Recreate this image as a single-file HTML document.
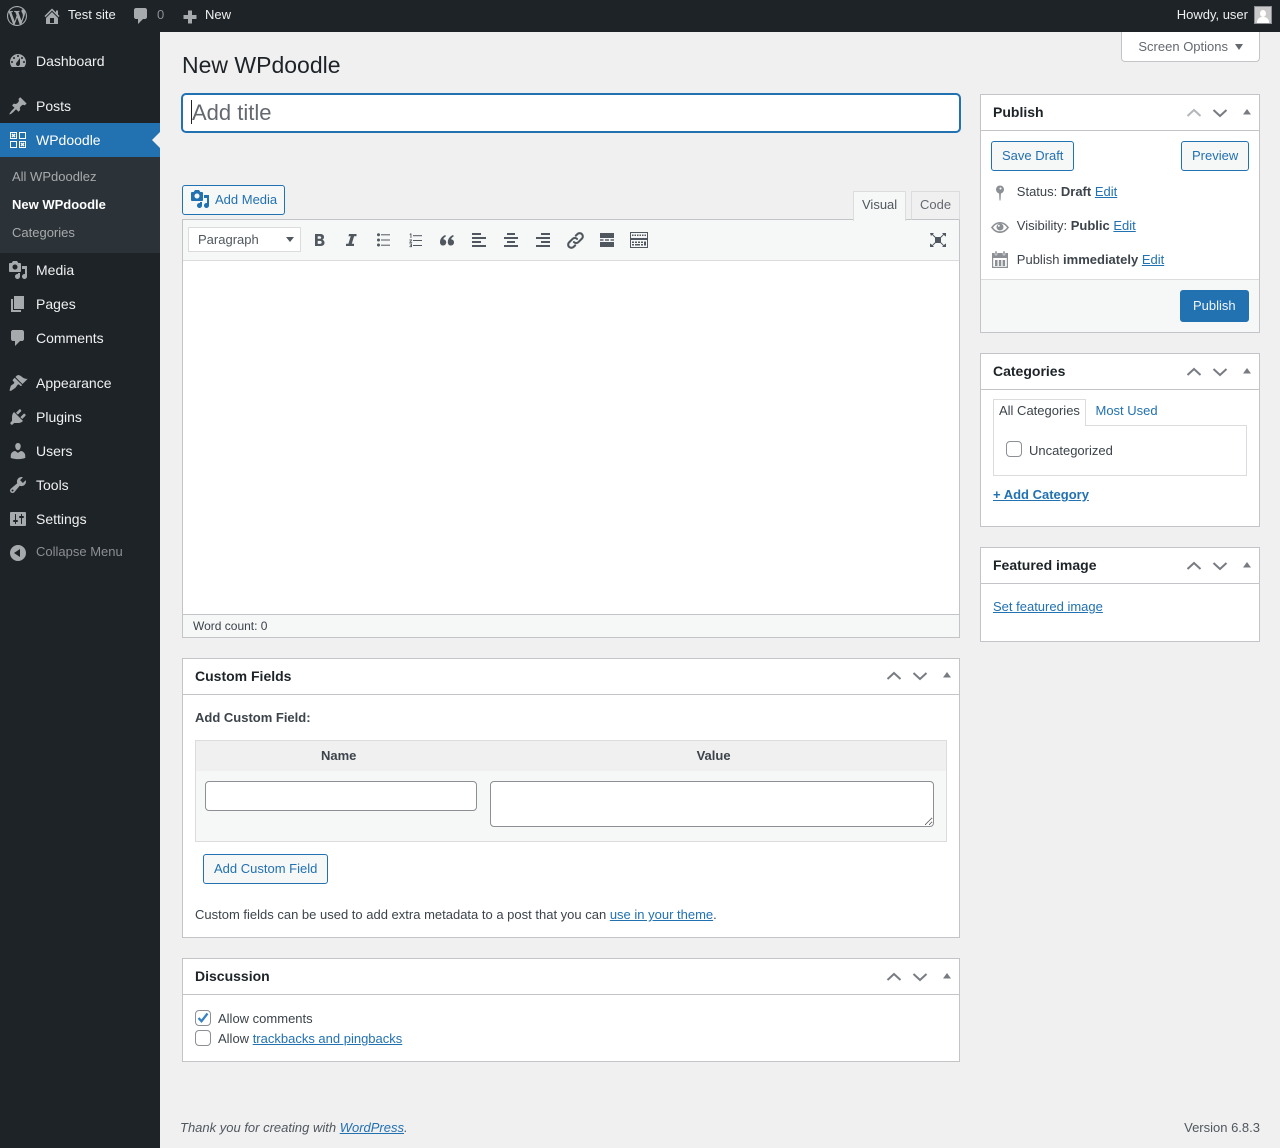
<!DOCTYPE html>
<html lang="en"><head><meta charset="utf-8"><title>New WPdoodle</title>
<style>
*{box-sizing:border-box}
html,body{margin:0;padding:0}
body{width:1280px;height:1148px;position:relative;overflow:hidden;background:#f0f0f1;font:13px/20px "Liberation Sans",sans-serif;color:#3c434a}
.a{position:absolute}
.t{position:absolute;white-space:nowrap;line-height:20px}
a{color:#2271b1;text-decoration:underline}
svg{position:absolute;display:block;overflow:visible}
.ic{width:20px;height:20px;fill:#a7aaad;left:8px}
.m{left:36px;font-size:14px;color:#f0f0f1}
.s{left:12px;font-size:13px;color:#b0b4b8}
.bar{font-size:13px;color:#f0f0f1}
.box{position:absolute;background:#fff;border:1px solid #c3c4c7}
.hd{position:absolute;left:0;right:0;top:0;height:36px;border-bottom:1px solid #c3c4c7}
.h2{position:absolute;left:12px;top:7px;font-size:14px;font-weight:700;color:#1d2327;white-space:nowrap;line-height:20px}
.btn{position:absolute;border:1px solid #2271b1;border-radius:3px;background:#f6f7f7;color:#2271b1;text-align:left;padding-left:10px;font-size:13px;line-height:28px;white-space:nowrap}
.tb{fill:#50575e;width:20px;height:20px;top:230px}
input[type=checkbox]{appearance:none;-webkit-appearance:none;position:absolute;margin:0;width:16px;height:16px;border:1px solid #8c8f94;border-radius:4px;background:#fff}
.ctl{stroke:#787c82;stroke-width:2;fill:none}
.cv{width:65px;height:10px}
</style></head><body>

<!-- admin bar -->
<div class="a" style="left:0;top:0;width:1280px;height:32px;background:#1d2327"></div>
<svg style="left:7px;top:6px;width:20px;height:20px;fill:#a7aaad" viewBox="0 0 20 20"><path fill-rule="evenodd" d="M20 10c0-5.51-4.49-10-10-10C4.48 0 0 4.49 0 10c0 5.52 4.48 10 10 10 5.51 0 10-4.48 10-10zM7.78 15.37L4.37 6.22c.55-.02 1.17-.08 1.17-.08.5-.06.44-1.13-.06-1.11 0 0-1.45.11-2.37.11-.18 0-.37 0-.58-.01C4.12 2.69 6.87 1.11 10 1.11c2.33 0 4.45.87 6.05 2.34-.68-.11-1.65.39-1.65 1.58 0 .74.45 1.36.9 2.1.35.61.55 1.36.55 2.46 0 1.49-1.4 5-1.4 5l-3.03-8.37c.54-.02.82-.17.82-.17.5-.05.44-1.25-.06-1.22 0 0-1.44.12-2.38.12-.87 0-2.33-.12-2.33-.12-.5-.03-.56 1.2-.06 1.22l.92.08 1.26 3.41zM17.41 10c.24-.64.74-1.87.43-4.25.7 1.29 1.05 2.71 1.05 4.25 0 3.29-1.73 6.24-4.4 7.78.97-2.59 1.94-5.2 2.92-7.78zM6.1 18.09C3.12 16.65 1.11 13.53 1.11 10c0-1.3.23-2.48.72-3.59C3.25 10.3 4.67 14.2 6.1 18.09zm4.03-6.63l2.58 6.98c-.86.29-1.76.45-2.71.45-.79 0-1.57-.11-2.29-.33.81-2.38 1.62-4.74 2.42-7.1z"/></svg>
<svg style="left:42px;top:6px;width:20px;height:20px;fill:#a7aaad" viewBox="0 0 20 20"><path fill-rule="evenodd" d="M16 8.5l1.53 1.53-1.06 1.06L10 4.62l-6.47 6.47-1.06-1.06L10 2.5l4 4v-2h2v4zm-6-2.46l6 5.99V18H4v-5.97zM12 17v-5H8v5h4z"/></svg>
<div class="t bar" style="left:68px;top:5px">Test site</div>
<svg style="left:131px;top:6px;width:20px;height:20px;fill:#a7aaad" viewBox="0 0 20 20"><path d="M5 2h9c1.1 0 2 .9 2 2v7c0 1.1-.9 2-2 2h-2l-5 5v-5H5c-1.1 0-2-.9-2-2V4c0-1.1.9-2 2-2z"/></svg>
<div class="t bar" style="left:157px;top:5px;color:#8c8f94">0</div>
<svg style="left:179.5px;top:7.5px;width:20px;height:20px;fill:#a7aaad" viewBox="0 0 20 20"><path d="M16.5 7v4H12v4.500H8V11H3.500V7H8V2.500h4V7h4.500z"/></svg>
<div class="t bar" style="left:205px;top:5px">New</div>
<div class="t bar" style="right:32px;top:5px">Howdy, user</div>
<div class="a" style="left:1254px;top:6px;width:18px;height:18px;background:#c9c9c9;border:1px solid #8c8f94;overflow:hidden">
<div class="a" style="left:5px;top:3px;width:6px;height:7px;border-radius:50%;background:#fff"></div>
<div class="a" style="left:2px;top:10px;width:12px;height:8px;border-radius:5px 5px 0 0;background:#fff"></div></div>

<!-- sidebar -->
<div class="a" style="left:0;top:32px;width:160px;height:1116px;background:#1d2327"></div>
<div class="a" style="left:0;top:123px;width:160px;height:34px;background:#2271b1"></div>
<div class="a" style="left:0;top:157px;width:160px;height:96px;background:#2c3338"></div>
<div class="a" style="left:152px;top:132px;width:0;height:0;border:8px solid transparent;border-left:0;border-right-color:#f0f0f1"></div>

<svg class="ic" style="top:51px" viewBox="0 0 20 20"><path fill-rule="evenodd" d="M3.76 16h12.48c1.1-1.37 1.76-3.11 1.76-5 0-4.42-3.58-8-8-8s-8 3.58-8 8c0 1.89.66 3.63 1.76 5zM10 4c.55 0 1 .45 1 1s-.45 1-1 1-1-.45-1-1 .45-1 1-1zM6 6c.55 0 1 .45 1 1s-.45 1-1 1-1-.45-1-1 .45-1 1-1zm8 0c.55 0 1 .45 1 1s-.45 1-1 1-1-.45-1-1 .45-1 1-1zm-5.37 5.55L12 7v6c0 1.1-.9 2-2 2s-2-.9-2-2c0-.57.24-1.08.63-1.45zM4 10c.55 0 1 .45 1 1s-.45 1-1 1-1-.45-1-1 .45-1 1-1zm12 0c.55 0 1 .45 1 1s-.45 1-1 1-1-.45-1-1 .45-1 1-1z"/></svg>
<div class="t m" style="top:51px">Dashboard</div>
<svg class="ic" style="top:96px" viewBox="0 0 20 20"><path d="M10.44 3.02l1.82-1.82 6.36 6.35-1.83 1.82c-1.05-.68-2.48-.57-3.41.36l-.75.75c-.92.93-1.04 2.35-.35 3.41l-1.83 1.82-2.41-2.41-2.8 2.79c-.42.42-3.38 2.71-3.8 2.29s1.86-3.39 2.28-3.81l2.79-2.79L4.1 9.36l1.83-1.82c1.05.69 2.48.57 3.4-.36l.75-.75c.93-.92 1.05-2.35.36-3.41z"/></svg>
<div class="t m" style="top:96px">Posts</div>
<svg style="left:10px;top:132px;width:16px;height:16px" viewBox="0 0 16 16">
<g fill="none" stroke="#fff" stroke-width="1"><rect x=".5" y=".5" width="6" height="6"/><rect x="9.5" y=".5" width="6" height="6"/><rect x=".5" y="9.5" width="6" height="6"/><rect x="9.5" y="9.5" width="6" height="6"/></g>
<g fill="none" stroke="#fff" stroke-width="1.400"><path d="M2 2L5 5M5 2L2 5"/><path d="M11 11L14 14M14 11L11 14"/></g></svg>
<div class="t m" style="top:130px;color:#fff">WPdoodle</div>
<div class="t s" style="top:167px;color:#a7aaad">All WPdoodlez</div>
<div class="t s" style="top:195px;color:#fff;font-weight:700">New WPdoodle</div>
<div class="t s" style="top:223px;color:#a7aaad">Categories</div>
<svg class="ic" style="top:260px" viewBox="0 0 20 20"><path fill-rule="evenodd" d="M13 11V4c0-.55-.45-1-1-1h-1.67L9 1H5L3.67 3H2c-.55 0-1 .45-1 1v7c0 .55.45 1 1 1h10c.55 0 1-.45 1-1zM7 4.5c1.38 0 2.5 1.12 2.5 2.5S8.38 9.5 7 9.5 4.5 8.38 4.5 7 5.62 4.5 7 4.5zM14 6h5v10.5c0 1.38-1.12 2.5-2.5 2.5S14 17.88 14 16.5s1.12-2.5 2.5-2.5c.17 0 .34.02.5.05V9h-3V6zm-4 8.05V13h2v3.5c0 1.38-1.12 2.5-2.5 2.5S7 17.88 7 16.5 8.12 14 9.5 14c.17 0 .34.02.5.05z"/></svg>
<div class="t m" style="top:260px">Media</div>
<svg class="ic" style="top:294px" viewBox="0 0 20 20"><path d="M6 15V2h10v13H6zm-1 1h8v2H3V5h2v11z"/></svg>
<div class="t m" style="top:294px">Pages</div>
<svg class="ic" style="top:328px" viewBox="0 0 20 20"><path d="M5 2h9c1.1 0 2 .9 2 2v7c0 1.1-.9 2-2 2h-2l-5 5v-5H5c-1.1 0-2-.9-2-2V4c0-1.1.9-2 2-2z"/></svg>
<div class="t m" style="top:328px">Comments</div>
<svg class="ic" style="top:373px" viewBox="0 0 20 20"><path d="M14.48 11.06L7.41 3.99l1.5-1.5c.5-.56 2.3-.47 3.51.32 1.21.8 1.43 1.28 2.91 2.1 1.18.64 2.45 1.26 4.45.85zm-.71.71L6.7 4.7 4.93 6.47c-.39.39-.39 1.02 0 1.41l1.06 1.06c.39.39.39 1.03 0 1.42-.6.6-1.43 1.11-2.21 1.69-.35.26-.7.53-1.01.84L1.5 17.5c.5.5 1.5.5 2 0l3.8-2.6c.31-.31.58-.66.84-1.01.58-.78 1.09-1.61 1.69-2.21.39-.39 1.03-.39 1.42 0l1.06 1.06c.39.39 1.02.39 1.41 0z"/></svg>
<div class="t m" style="top:373px">Appearance</div>
<svg class="ic" style="top:407px" viewBox="0 0 20 20"><path d="M13.11 4.36L9.87 7.6 8 5.73l3.24-3.24c.35-.34 1.05-.2 1.56.32.52.51.66 1.21.31 1.55zm-8 1.77l.91-1.12 9.01 9.01-1.19.84c-.71.71-2.63 1.16-3.82 1.16H6.14L4.9 17.26c-.59.59-1.54.59-2.12 0-.59-.58-.59-1.53 0-2.12l1.24-1.24v-3.88c0-1.13.4-3.19 1.09-3.89zm7.26 3.97l3.24-3.24c.34-.35 1.04-.21 1.55.31.52.51.66 1.21.31 1.55l-3.24 3.25z"/></svg>
<div class="t m" style="top:407px">Plugins</div>
<svg class="ic" style="top:441px" viewBox="0 0 20 20"><path d="M10 9.25c-2.27 0-2.73-3.44-2.73-3.44C7 4.02 7.82 2 9.97 2c2.16 0 2.98 2.02 2.71 3.81 0 0-.41 3.44-2.68 3.44zm0 2.57L12.72 10c2.39 0 4.52 2.33 4.52 4.53v2.49s-3.65 1.13-7.24 1.13c-3.65 0-7.24-1.13-7.24-1.13v-2.49c0-2.25 1.94-4.48 4.47-4.48z"/></svg>
<div class="t m" style="top:441px">Users</div>
<svg class="ic" style="top:475px" viewBox="0 0 20 20"><path fill-rule="evenodd" d="M16.68 9.77c-1.34 1.34-3.3 1.67-4.95.99l-5.41 6.52c-.99.99-2.59.99-3.58 0s-.99-2.59 0-3.57l6.52-5.42c-.68-1.65-.35-3.61.99-4.95 1.28-1.28 3.12-1.62 4.72-1.06l-2.89 2.89 2.82 2.82 2.86-2.87c.53 1.58.18 3.39-1.08 4.65zM3.81 16.21c.4.39 1.04.39 1.43 0 .4-.4.4-1.04 0-1.43-.39-.4-1.03-.4-1.43 0-.39.39-.39 1.03 0 1.43z"/></svg>
<div class="t m" style="top:475px">Tools</div>
<svg class="ic" style="top:509px" viewBox="0 0 20 20"><path fill-rule="evenodd" d="M18 16V4c0-.55-.45-1-1-1H3c-.55 0-1 .45-1 1v12c0 .55.45 1 1 1h14c.55 0 1-.45 1-1zM8 11h1c.55 0 1 .45 1 1s-.45 1-1 1H8v1.5c0 .28-.22.5-.5.5s-.5-.22-.5-.5V13H6c-.55 0-1-.45-1-1s.45-1 1-1h1V5.5c0-.28.22-.5.5-.5s.5.22.5.5V11zm5-2h-1c-.55 0-1-.45-1-1s.45-1 1-1h1V5.5c0-.28.22-.5.5-.5s.5.22.5.5V7h1c.55 0 1 .45 1 1s-.45 1-1 1h-1v5.5c0 .28-.22.5-.5.5s-.5-.22-.5-.5V9z"/></svg>
<div class="t m" style="top:509px">Settings</div>
<svg class="ic" style="top:543px" viewBox="0 0 20 20"><path fill-rule="evenodd" d="M18 10c0-4.42-3.58-8-8-8s-8 3.58-8 8 3.58 8 8 8 8-3.58 8-8zm-6-4v8L6 10z"/></svg>
<div class="t" style="left:36px;top:542px;font-size:13px;color:#8c8f94">Collapse Menu</div>

<!-- header -->
<div class="t" style="left:182px;top:50px;font-size:23px;line-height:30px;color:#1d2327">New WPdoodle</div>
<div class="a" style="left:1121px;top:32px;width:139px;height:30px;background:#fff;border:1px solid #c3c4c7;border-top:0;border-radius:0 0 4px 4px"></div>
<div class="t" style="left:1138.400px;top:37px;color:#646970">Screen Options</div>
<div class="a" style="left:1235px;top:44px;width:0;height:0;border:4px solid transparent;border-top:6px solid #646970;border-bottom:0"></div>

<!-- title -->
<div class="a" style="left:182px;top:94px;width:778px;height:38px;background:#fff;border:1px solid #2271b1;box-shadow:0 0 0 1px #2271b1;border-radius:4px"></div>
<div class="t" style="left:192px;top:98px;font-size:22px;line-height:30px;color:#646970">Add title</div>
<div class="a" style="left:191px;top:100px;width:1px;height:24px;background:#1d2327"></div>

<!-- editor -->
<div class="btn" style="left:182px;top:185px;width:103px;height:30px;padding-left:32px">Add Media</div>
<svg style="left:191px;top:190px;width:18px;height:18px;fill:#2271b1" viewBox="1 1 18 18"><path fill-rule="evenodd" d="M13 11V4c0-.55-.45-1-1-1h-1.67L9 1H5L3.67 3H2c-.55 0-1 .45-1 1v7c0 .55.45 1 1 1h10c.55 0 1-.45 1-1zM7 4.5c1.38 0 2.5 1.12 2.5 2.5S8.38 9.5 7 9.5 4.5 8.38 4.5 7 5.62 4.5 7 4.5zM14 6h5v10.5c0 1.38-1.12 2.5-2.5 2.5S14 17.88 14 16.5s1.12-2.5 2.5-2.5c.17 0 .34.02.5.05V9h-3V6zm-4 8.05V13h2v3.5c0 1.38-1.12 2.5-2.5 2.5S7 17.88 7 16.5 8.12 14 9.5 14c.17 0 .34.02.5.05z"/></svg>

<div class="a" style="left:182px;top:219px;width:778px;height:419px;background:#fff;border:1px solid #c3c4c7"></div>
<div class="a" style="left:183px;top:220px;width:776px;height:41px;background:#f6f7f7;border-bottom:1px solid #dcdcde"></div>
<div class="a" style="left:911px;top:191px;width:49px;height:29px;background:#f0f0f1;border:1px solid #dcdcde;border-bottom:1px solid #c3c4c7"></div>
<div class="t" style="left:920px;top:195px;color:#646970">Code</div>
<div class="a" style="left:853px;top:191px;width:53px;height:30px;background:#f6f7f7;border:1px solid #dcdcde;border-bottom:0"></div>
<div class="t" style="left:862px;top:195px;color:#50575e">Visual</div>
<div class="a" style="left:183px;top:614px;width:776px;height:23px;background:#f6f7f7;border-top:1px solid #c3c4c7"></div>
<div class="t" style="left:193px;top:616px;font-size:12px;color:#3c434a">Word count: 0</div>

<div class="a" style="left:188px;top:227px;width:113px;height:25px;background:#fff;border:1px solid #dcdcde"></div>
<div class="t" style="left:198px;top:230px;color:#50575e">Paragraph</div>
<div class="a" style="left:286px;top:237px;width:0;height:0;border:4px solid transparent;border-top:5px solid #50575e;border-bottom:0"></div>

<svg class="tb" style="left:309px" viewBox="0 0 20 20"><path fill-rule="evenodd" d="M6 4h5.3c2.3 0 3.700 1.100 3.700 3.100 0 1.300-.7 2.300-1.800 2.700 1.400.4 2.300 1.400 2.300 3 0 2.200-1.600 3.200-3.900 3.200H6V4zm2.700 2.200v2.600h2c.9 0 1.500-.4 1.500-1.300s-.6-1.300-1.500-1.300h-2zm0 4.700v3H11c1 0 1.700-.5 1.700-1.500s-.7-1.500-1.700-1.500H8.700z"/></svg>
<svg class="tb" style="left:341px" viewBox="0 0 20 20"><path d="M8 4h7.500v2.200h-2.400L10.800 13.800H13V16H5v-2.200h2.400L9.700 6.200H7.500z"/></svg>
<svg class="tb" style="left:373px" viewBox="0 0 20 20"><circle cx="5.500" cy="4.800" r="1.500"/><circle cx="5.500" cy="10" r="1.500"/><circle cx="5.500" cy="15" r="1.500"/><rect x="8" y="4.300" width="9" height="1"/><rect x="8" y="9.500" width="9" height="1"/><rect x="8" y="14.700" width="9" height="1"/></svg>
<svg class="tb" style="left:405px" viewBox="0 0 20 20"><rect x="8" y="5.200" width="9" height="1"/><rect x="8" y="10" width="9" height="1"/><rect x="8" y="15" width="9" height="1"/><path d="M5 3.500h1.400V8H5.500V4.600L4.600 5zM4.400 9.500H7v.9l-1.500 1.500h1.600v.8H4.400V12L6 10.400H4.400zM4.400 13.500H7v3.600H4.400v-.8h1.700v-.7H5v-.7h1.100v-.6H4.400z"/></svg>
<svg class="tb" style="left:437px" viewBox="0 0 20 20"><path d="M3 12.200C3 9 5 6.300 8.300 5L9 6.300C7.300 7.400 6.400 8.400 6.300 9.400 8 9.400 9.200 10.600 9.200 12.400 9.200 14.200 7.900 15.500 6.100 15.500 4.200 15.500 3 14.200 3 12.200z"/><path d="M10.800 12.200C10.800 9 12.800 6.300 16.100 5L16.800 6.300C15.100 7.400 14.200 8.400 14.100 9.400 15.800 9.400 17 10.600 17 12.400 17 14.200 15.700 15.500 13.900 15.500 12 15.500 10.800 14.200 10.800 12.200z"/></svg>
<svg class="tb" style="left:469px" viewBox="0 0 20 20"><rect x="3" y="3" width="9" height="2"/><rect x="3" y="7" width="14" height="2"/><rect x="3" y="11" width="9" height="2"/><rect x="3" y="15" width="14" height="2"/></svg>
<svg class="tb" style="left:501px" viewBox="0 0 20 20"><rect x="6" y="3" width="8" height="2"/><rect x="3" y="7" width="14" height="2"/><rect x="6" y="11" width="8" height="2"/><rect x="3" y="15" width="14" height="2"/></svg>
<svg class="tb" style="left:533px" viewBox="0 0 20 20"><rect x="8" y="3" width="9" height="2"/><rect x="3" y="7" width="14" height="2"/><rect x="8" y="11" width="9" height="2"/><rect x="3" y="15" width="14" height="2"/></svg>
<svg class="tb" style="left:564.500px;top:229.500px;width:21px;height:21px" viewBox="0 0 20 20" fill="none"><g fill="none" stroke="#50575e" stroke-width="2" stroke-linecap="round"><path d="M8.500 11.500a3 3 0 0 0 4.300 0l3.300-3.300a3 3 0 0 0-4.300-4.300l-1.500 1.500"/><path d="M11.500 8.500a3 3 0 0 0-4.300 0l-3.300 3.300a3 3 0 0 0 4.300 4.300l1.500-1.500"/></g></svg>
<svg class="tb" style="left:597px" viewBox="0 0 20 20"><rect x="3" y="3" width="14" height="5"/><rect x="3" y="9.300" width="3.500" height="1.400"/><rect x="8" y="9.300" width="4" height="1.400"/><rect x="13.500" y="9.300" width="3.500" height="1.400"/><rect x="3" y="12" width="14" height="5"/></svg>
<svg class="tb" style="left:629px" viewBox="0 0 20 20"><g fill="none" stroke="#50575e" stroke-width="1"><rect x="1.500" y="2.500" width="17" height="6"/><rect x="1.500" y="9.500" width="17" height="8"/></g><path d="M3 4.500h1.500V6H3zM5.500 4.500H7V6H5.500zM8 4.500h1.500V6H8zM10.500 4.500H12V6h-1.500zM13 4.500h1.500V6H13zM15.500 4.500H17V6h-1.500zM3 11.500h2V13H3zM6 11.500h2V13H6zM9 11.500h2V13H9zM12 11.500h2V13h-2zM15 11.500h2v4h-2zM3 14h2v1.500H3zM6 14h5v1.500H6zM12 14h2v1.500h-2z"/></svg>
<svg class="tb" style="left:928px" viewBox="0 0 20 20"><rect x="7" y="7" width="6" height="6"/><path d="M2 3h4L4.800 4.200 7.500 6.900 6.800 7.600 4.100 4.900 3 6zM18 3h-4l1.200 1.200-2.700 2.700.7.700 2.700-2.700L16.900 6 18 6.500zM2 17h4l-1.200-1.200 2.700-2.700-.7-.7-2.700 2.700L3 14l-1-.5zM18 17h-4l1.200-1.200-2.700-2.700.7-.7 2.700 2.700L17 14l1-.5z"/></svg>

<!-- Custom fields -->
<div class="box" style="left:182px;top:658px;width:778px;height:280px"><div class="hd"></div><div class="h2">Custom Fields</div></div>
<svg class="cv" style="left:887px;top:671px" viewBox="0 0 65 10"><path class="ctl" d="M.5 8L7 2l6.500 6M26.500 2L33 8l6.500-6"/><path d="M56 6.500l4-5.500 4 5.500z" fill="#787c82"/></svg>
<div class="t" style="left:195px;top:708px;font-weight:700">Add Custom Field:</div>
<div class="a" style="left:195px;top:740px;width:752px;height:102px;background:#f6f7f7;border:1px solid #dcdcde"></div>
<div class="a" style="left:196px;top:741px;width:750px;height:30px;background:#f0f0f1"></div>
<div class="t" style="left:321px;top:746px;font-weight:700">Name</div>
<div class="t" style="left:696.600px;top:746px;font-weight:700">Value</div>
<input class="a" style="left:205px;top:781px;width:272px;height:30px;border:1px solid #8c8f94;border-radius:4px;background:#fff;padding:0;margin:0">
<textarea class="a" style="left:490px;top:781px;width:444px;height:46px;border:1px solid #8c8f94;border-radius:4px;background:#fff;padding:0;margin:0"></textarea>
<div class="btn" style="left:203px;top:854px;width:125px;height:30px">Add Custom Field</div>
<div class="t" style="left:195px;top:905px">Custom fields can be used to add extra metadata to a post that you can <a>use in your theme</a>.</div>

<!-- Discussion -->
<div class="box" style="left:182px;top:958px;width:778px;height:104px"><div class="hd"></div><div class="h2">Discussion</div></div>
<svg class="cv" style="left:887px;top:971.500px" viewBox="0 0 65 10"><path class="ctl" d="M.5 8L7 2l6.500 6M26.500 2L33 8l6.500-6"/><path d="M56 6.500l4-5.500 4 5.500z" fill="#787c82"/></svg>
<input type="checkbox" style="left:195px;top:1010px">
<svg style="left:195px;top:1010px;width:16px;height:16px" viewBox="0 0 16 16"><path d="M3.500 8l3 3.200L12.500 3.500" fill="none" stroke="#3582c4" stroke-width="2.300"/></svg>
<div class="t" style="left:218px;top:1009px">Allow comments</div>
<input type="checkbox" style="left:195px;top:1030px">
<div class="t" style="left:218px;top:1029px">Allow <a>trackbacks and pingbacks</a></div>

<!-- Publish -->
<div class="box" style="left:980px;top:94px;width:280px;height:239px"><div class="hd"></div><div class="h2">Publish</div></div>
<svg class="cv" style="left:1187px;top:108px" viewBox="0 0 65 10"><path d="M.5 8L7 2l6.500 6" fill="none" stroke="#b4b7ba" stroke-width="2"/><path class="ctl" d="M26.500 2L33 8l6.500-6"/><path d="M56 6.500l4-5.500 4 5.500z" fill="#787c82"/></svg>
<div class="btn" style="left:991px;top:141px;width:83px;height:30px">Save Draft</div>
<div class="btn" style="left:1181px;top:141px;width:68px;height:30px">Preview</div>
<svg style="left:993px;top:185px;width:14px;height:16px;fill:#8c8f94" viewBox="0 0 14 16"><circle cx="7" cy="4.500" r="4"/><path d="M6 7h2l-.5 8.500h-1z"/><circle cx="7.500" cy="3.500" r="1" fill="#fff"/></svg>
<div class="t" style="left:1016.800px;top:182px">Status: <b>Draft</b> <a>Edit</a></div>
<svg style="left:990px;top:219px;width:20px;height:16px;fill:#8c8f94" viewBox="0 0 20 16"><path fill-rule="evenodd" d="M1 8.500C3.500 4.800 6.500 3 10 3s6.500 1.800 9 5.500C16.500 12.200 13.500 14 10 14S3.500 12.200 1 8.500zm2 0c1.700 2.300 4 3.800 7 3.800s5.300-1.500 7-3.800C15.300 6 13 4.500 10 4.500S4.700 6 3 8.500z"/><circle cx="10" cy="8" r="3.500"/><circle cx="8.800" cy="6.800" r="1" fill="#fff"/></svg>
<div class="t" style="left:1016.800px;top:216px">Visibility: <b>Public</b> <a>Edit</a></div>
<svg style="left:992px;top:251px;width:16px;height:17px;fill:#8c8f94" viewBox="0 0 16 17"><path fill-rule="evenodd" d="M0 2h16v15H0zM1.200 7v8.800h13.600V7z"/><path d="M3 0h2v4H3zM11 0h2v4h-2z" stroke="#fff" stroke-width=".5"/><rect x="3" y="9" width="2.500" height="6"/><rect x="6.800" y="9" width="2.500" height="6"/><rect x="10.600" y="9" width="2.500" height="6"/></svg>
<div class="t" style="left:1016.800px;top:250px">Publish <b>immediately</b> <a>Edit</a></div>
<div class="a" style="left:981px;top:279px;width:278px;height:53px;background:#f6f7f7;border-top:1px solid #dcdcde"></div>
<div class="btn" style="left:1180px;top:290px;width:69px;height:32px;background:#2271b1;color:#f0f6fc;line-height:30px;padding-left:12px">Publish</div>

<!-- Categories -->
<div class="box" style="left:980px;top:353px;width:280px;height:174px"><div class="hd"></div><div class="h2">Categories</div></div>
<svg class="cv" style="left:1187px;top:367px" viewBox="0 0 65 10"><path class="ctl" d="M.5 8L7 2l6.500 6M26.500 2L33 8l6.500-6"/><path d="M56 6.500l4-5.500 4 5.500z" fill="#787c82"/></svg>
<div class="a" style="left:993px;top:425px;width:254px;height:51px;border:1px solid #dcdcde"></div>
<div class="a" style="left:993px;top:399px;width:93px;height:27px;border:1px solid #dcdcde;border-bottom:0;background:#fff"></div>
<div class="t" style="left:999px;top:401px">All Categories</div>
<div class="t" style="left:1095.500px;top:401px;color:#2271b1">Most Used</div>
<input type="checkbox" style="left:1006px;top:441px">
<div class="t" style="left:1029px;top:441px">Uncategorized</div>
<div class="t" style="left:993px;top:485px;font-weight:700"><a>+ Add Category</a></div>

<!-- Featured -->
<div class="box" style="left:980px;top:547px;width:280px;height:95px"><div class="hd"></div><div class="h2">Featured image</div></div>
<svg class="cv" style="left:1187px;top:561px" viewBox="0 0 65 10"><path class="ctl" d="M.5 8L7 2l6.500 6M26.500 2L33 8l6.500-6"/><path d="M56 6.500l4-5.500 4 5.500z" fill="#787c82"/></svg>
<div class="t" style="left:993px;top:597px"><a>Set featured image</a></div>

<!-- footer -->
<div class="t" style="left:180px;top:1118px;font-style:italic;color:#50575e">Thank you for creating with <a>WordPress</a>.</div>
<div class="t" style="right:20px;top:1118px;color:#50575e">Version 6.8.3</div>
</body></html>
